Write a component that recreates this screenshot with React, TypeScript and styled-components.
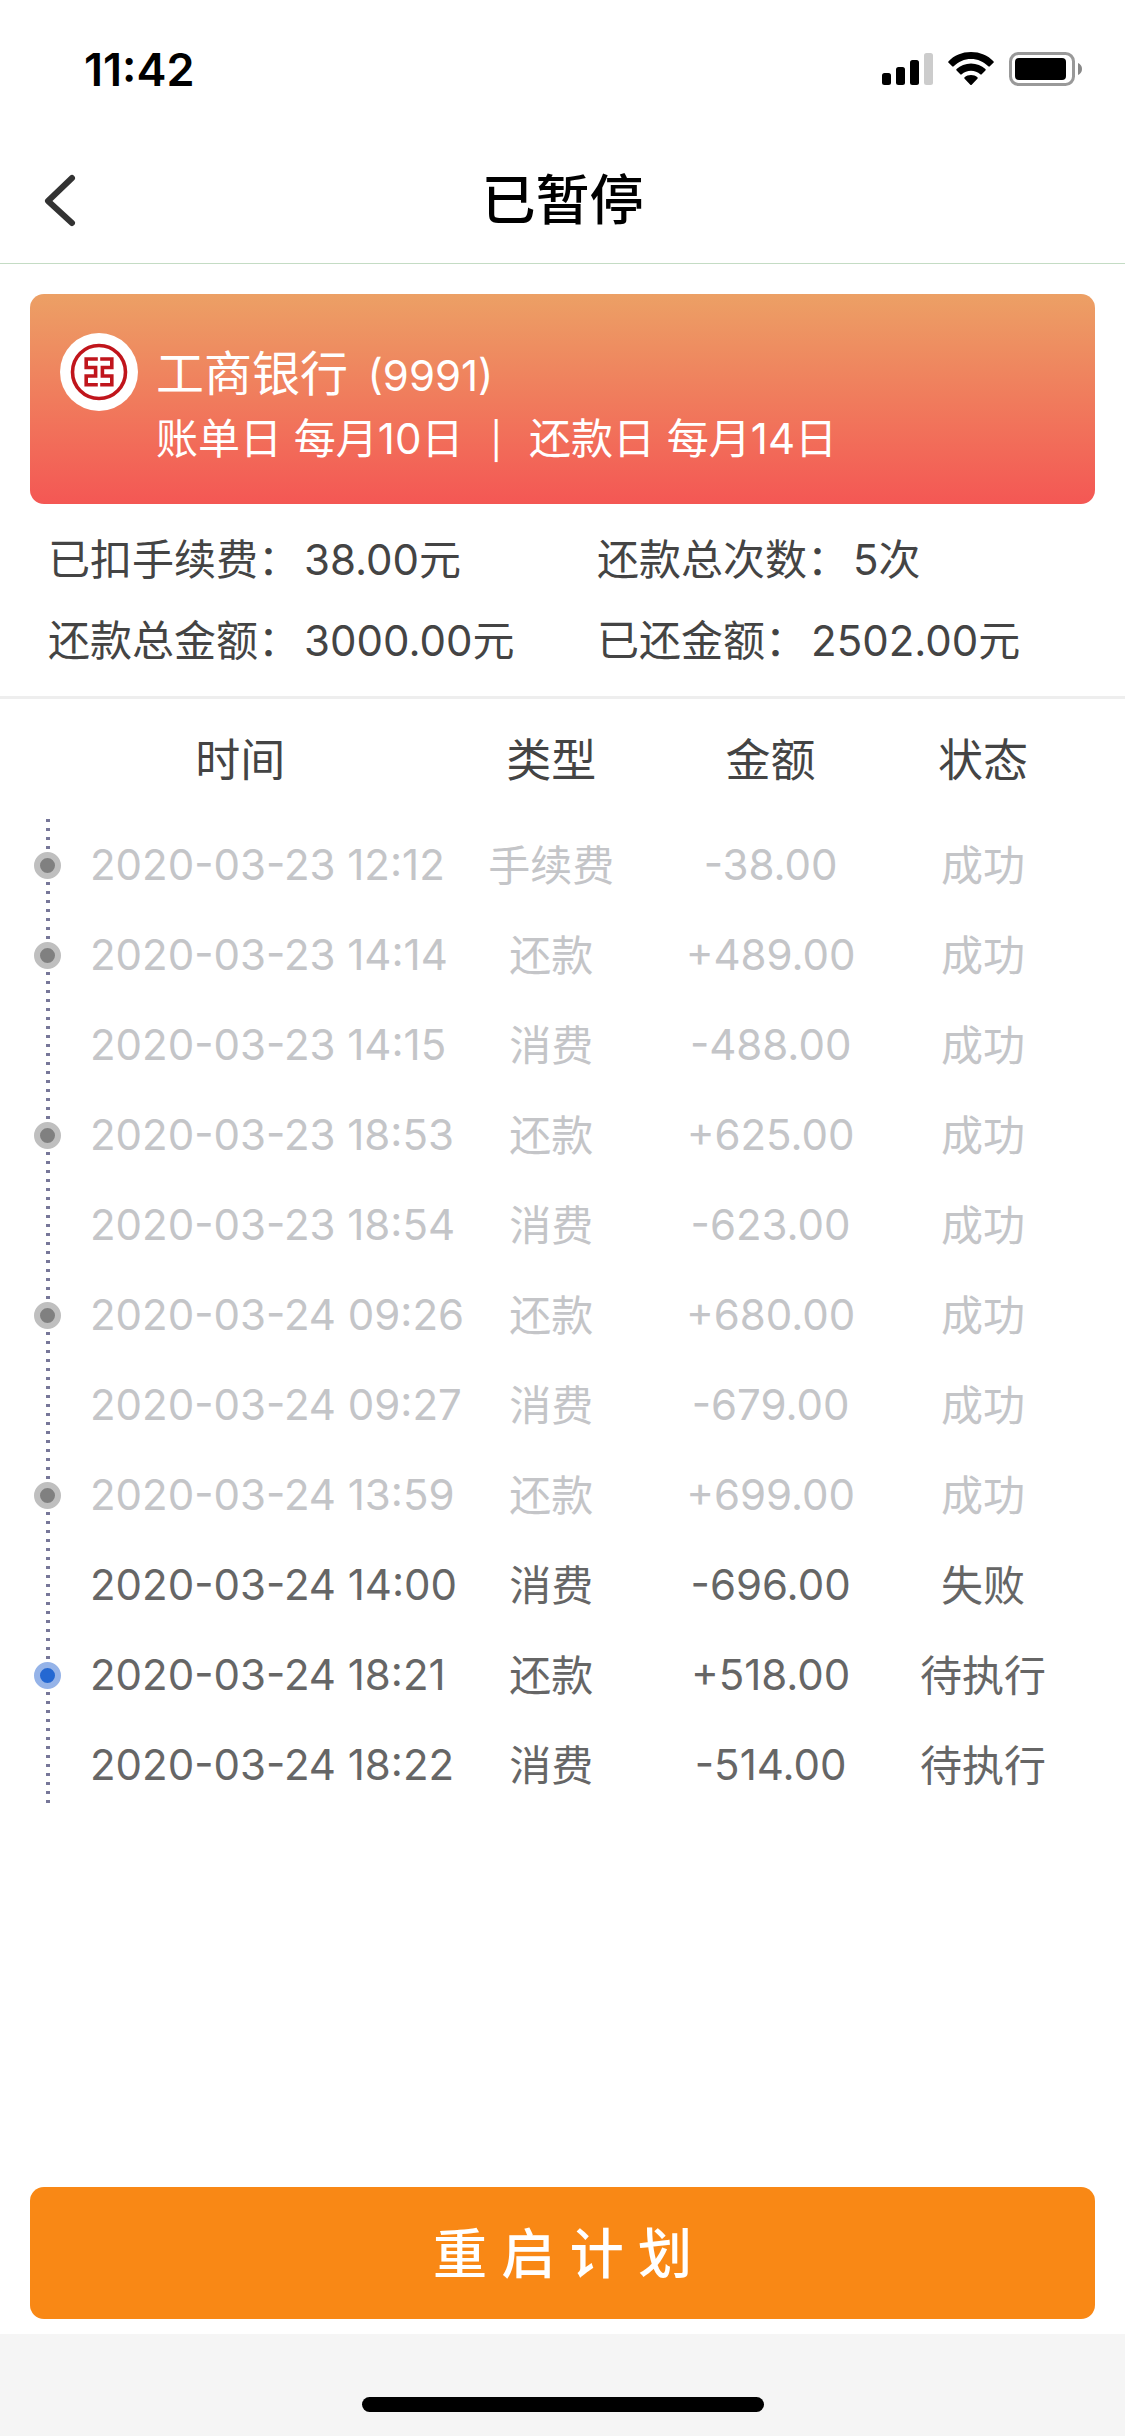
import React from "react";
import styled, { createGlobalStyle } from "styled-components";

const GlobalStyle = createGlobalStyle`
  * { box-sizing: border-box; }
  body {
    margin: 0;
    background: #fff;
    font-family: Inter, "Noto Sans CJK SC", sans-serif;
    font-size: 42px;
  }
`;

const Screen = styled.div`
  min-height: 100vh;
  display: flex;
  flex-direction: column;
`;

const StatusBar = styled.div`
  height: 132px;
  padding: 6px 42px 0 84px;
  display: flex;
  align-items: center;
  justify-content: space-between;
`;

const Clock = styled.span`
  font-size: 45px;
  font-weight: 600;
  color: #000;
`;

const StatusIcons = styled.div`
  display: flex;
  align-items: center;
  gap: 15px;

  svg { display: block; }
`;

const NavBar = styled.header`
  height: 132px;
  padding: 6px 30px 0;
  display: grid;
  grid-template-columns: 60px 1fr 60px;
  align-items: center;
  border-bottom: 1px solid #c4dcc4;
`;

const BackButton = styled.button`
  width: 60px;
  height: 60px;
  padding: 0;
  border: 0;
  background: none;

  svg { display: block; }
`;

const Title = styled.h1`
  margin: 0;
  font-size: 54px;
  line-height: 60px;
  font-weight: 500;
  text-align: center;
  color: #000;
`;

const BankCard = styled.section`
  margin: 30px 30px 0;
  height: 210px;
  padding: 39px 30px;
  display: flex;
  gap: 18px;
  border-radius: 14px;
  background: linear-gradient(#eca065, #f45754);
  color: #fff;

  svg { display: block; flex: none; }
`;

const BankName = styled.h2`
  margin: 0;
  font-size: 48px;
  line-height: 82px;
  font-weight: 400;
`;

const CardNumber = styled.span`
  margin-left: 6px;
  font-size: 42px;
`;

const BillDays = styled.p`
  margin: 0;
  line-height: 44px;
  white-space: nowrap;
`;

const Separator = styled.span`
  margin: 0 15px;
  font-size: 36px;
`;

const Summary = styled.dl`
  margin: 0;
  padding: 15px 48px;
  display: grid;
  grid-template-columns: 549fr 480fr;
  border-bottom: 3px solid #eee;
  color: #444;
`;

const SummaryItem = styled.div`
  display: flex;
  gap: 4px;
  line-height: 81px;
  white-space: nowrap;

  dt, dd { margin: 0; }
`;

const PlanTable = styled.table`
  width: 100%;
  table-layout: fixed;
  border-collapse: collapse;
  white-space: nowrap;
`;

const HeadCell = styled.th`
  height: 120px;
  padding: 0 0 4px;
  font-size: 45px;
  font-weight: 400;
  color: #444;

  &:first-child { padding-left: 8px; }
  &:last-child { padding-right: 70px; }
`;

const Row = styled.tr<{ $done: boolean }>`
  color: ${(p) => (p.$done ? "#c4c5c8" : "#666")};
`;

const Cell = styled.td`
  height: 90px;
  padding: 0 0 4px;
  text-align: center;

  &:last-child { padding-right: 70px; }
`;

const AmountCell = styled(Cell)`
  padding: 0;
`;

const TimeCell = styled(Cell)`
  padding: 0;
  background: repeating-linear-gradient(#777799 0 3px, transparent 3px 9px) 46px 0 / 4px 90px no-repeat;
`;

const TimeLine = styled.div`
  padding: 2px 0 0 34px;
  display: flex;
  align-items: center;
  gap: 29px;

  time { padding-bottom: 2px; }
`;

const Node = styled.span<{ $tone?: "grey" | "blue" }>`
  width: 27px;
  height: 27px;
  flex: none;
  border: 6px solid ${(p) => (p.$tone === "blue" ? "#95b3e8" : "#bfbfbf")};
  border-radius: 50%;
  background: ${(p) => (p.$tone === "blue" ? "#2468d2" : "#808080")};
  visibility: ${(p) => (p.$tone ? "visible" : "hidden")};
`;

const ActionBar = styled.div`
  margin-top: auto;
  padding: 0 30px 15px;
`;

const RestartButton = styled.button`
  display: block;
  width: 100%;
  height: 132px;
  padding: 0 0 6px;
  border: 0;
  border-radius: 14px;
  background: #f98815;
  color: #fff;
  font-family: inherit;
  font-size: 54px;
  font-weight: 500;
`;

const HomeArea = styled.footer`
  height: 102px;
  padding-bottom: 24px;
  display: flex;
  align-items: flex-end;
  justify-content: center;
  background: #f5f5f5;
`;

const HomeIndicator = styled.div`
  width: 402px;
  height: 15px;
  border-radius: 8px;
  background: #000;
`;

const SignalIcon = () => (
  <svg width="51" height="34" viewBox="0 0 51 34" aria-hidden="true">
    <rect x="0" y="21" width="9" height="12" rx="2.5" />
    <rect x="14" y="15" width="9" height="18" rx="2.5" />
    <rect x="28" y="8" width="9" height="25" rx="2.5" />
    <rect x="42" y="1" width="9" height="32" rx="2.5" fill="#ccc" />
  </svg>
);

const WifiIcon = () => (
  <svg width="46" height="34" viewBox="0 0 46 34" aria-hidden="true">
    <path d="M23 0C14 0 6 3.400.6 9.200a1 1 0 0 0 0 1.500l3.600 3.600a1 1 0 0 0 1.500 0C10.300 9.700 16.300 7 23 7s12.700 2.700 17.300 7.300a1 1 0 0 0 1.500 0l3.600-3.600a1 1 0 0 0 0-1.500C40 3.400 32 0 23 0z" />
    <path d="M23 11.500c-5.600 0-10.700 2.100-14.400 5.600a1 1 0 0 0 0 1.500l3.700 3.700a1 1 0 0 0 1.400 0c2.500-2.200 5.800-3.600 9.300-3.600s6.800 1.400 9.300 3.600a1 1 0 0 0 1.400 0l3.700-3.700a1 1 0 0 0 0-1.500C33.700 13.600 28.600 11.500 23 11.500z" />
    <path d="M23 23c-2.500 0-4.700.9-6.400 2.300a1 1 0 0 0 0 1.500l5.700 5.900a1 1 0 0 0 1.400 0l5.700-5.900a1 1 0 0 0 0-1.500C27.700 23.900 25.500 23 23 23z" />
  </svg>
);

const BatteryIcon = () => (
  <svg width="74" height="34" viewBox="0 0 74 34" aria-hidden="true">
    <rect x="1.500" y="1.500" width="63" height="31" rx="8" fill="none" stroke="#999" strokeWidth="3" />
    <rect x="6" y="6" width="51" height="22" rx="4" />
    <path d="M69 11c2.600 1 4 3.400 4 6s-1.400 5-4 6z" fill="#888" />
  </svg>
);

const BackIcon = () => (
  <svg width="60" height="60" viewBox="0 0 60 60" fill="none" stroke="#333" strokeWidth="6" strokeLinecap="round" strokeLinejoin="round" aria-hidden="true">
    <path d="M42 7L18 30L42 52" />
  </svg>
);

const BankLogo = () => (
  <svg width="78" height="78" viewBox="0 0 78 78" role="img" aria-label="工商银行">
    <circle cx="39" cy="39" r="39" fill="#fff" />
    <circle cx="39" cy="39" r="26.500" fill="none" stroke="#c0151c" strokeWidth="3.600" />
    <g fill="none" stroke="#c0151c" strokeWidth="3.600">
      <path d="M37.800 26H26.200V34.500H35.600V43H26.200V51.800H37.800" />
      <path d="M40.200 26H51.800V34.500H42.400V43H51.800V51.800H40.200" />
    </g>
  </svg>
);

const summary = [
  ["已扣手续费：", "38.00元"],
  ["还款总次数：", "5次"],
  ["还款总金额：", "3000.00元"],
  ["已还金额：", "2502.00元"],
];

type Entry = { time: string; type: string; amount: string; status: string; node?: "grey" | "blue" };

const entries: Entry[] = [
  { time: "2020-03-23 12:12", type: "手续费", amount: "-38.00", status: "成功", node: "grey" },
  { time: "2020-03-23 14:14", type: "还款", amount: "+489.00", status: "成功", node: "grey" },
  { time: "2020-03-23 14:15", type: "消费", amount: "-488.00", status: "成功" },
  { time: "2020-03-23 18:53", type: "还款", amount: "+625.00", status: "成功", node: "grey" },
  { time: "2020-03-23 18:54", type: "消费", amount: "-623.00", status: "成功" },
  { time: "2020-03-24 09:26", type: "还款", amount: "+680.00", status: "成功", node: "grey" },
  { time: "2020-03-24 09:27", type: "消费", amount: "-679.00", status: "成功" },
  { time: "2020-03-24 13:59", type: "还款", amount: "+699.00", status: "成功", node: "grey" },
  { time: "2020-03-24 14:00", type: "消费", amount: "-696.00", status: "失败" },
  { time: "2020-03-24 18:21", type: "还款", amount: "+518.00", status: "待执行", node: "blue" },
  { time: "2020-03-24 18:22", type: "消费", amount: "-514.00", status: "待执行" },
];

const columnWidths = ["42%", "14%", "25%", "19%"];

export default function App() {
  return (
    <Screen>
      <GlobalStyle />
      <StatusBar>
        <Clock>11:42</Clock>
        <StatusIcons>
          <SignalIcon />
          <WifiIcon />
          <BatteryIcon />
        </StatusIcons>
      </StatusBar>
      <NavBar>
        <BackButton aria-label="返回">
          <BackIcon />
        </BackButton>
        <Title>已暂停</Title>
      </NavBar>
      <BankCard>
        <BankLogo />
        <div>
          <BankName>
            工商银行 <CardNumber>(9991)</CardNumber>
          </BankName>
          <BillDays>
            账单日 每月10日 <Separator>|</Separator> 还款日 每月14日
          </BillDays>
        </div>
      </BankCard>
      <Summary>
        {summary.map(([label, value]) => (
          <SummaryItem key={label}>
            <dt>{label}</dt>
            <dd>{value}</dd>
          </SummaryItem>
        ))}
      </Summary>
      <PlanTable>
        <colgroup>
          {columnWidths.map((width, i) => (
            <col key={i} style={{ width }} />
          ))}
        </colgroup>
        <thead>
          <tr>
            {["时间", "类型", "金额", "状态"].map((name) => (
              <HeadCell key={name} scope="col">{name}</HeadCell>
            ))}
          </tr>
        </thead>
        <tbody>
          {entries.map((entry) => (
            <Row key={entry.time} $done={entry.status === "成功"}>
              <TimeCell>
                <TimeLine>
                  <Node $tone={entry.node} />
                  <time>{entry.time}</time>
                </TimeLine>
              </TimeCell>
              <Cell>{entry.type}</Cell>
              <AmountCell>{entry.amount}</AmountCell>
              <Cell>{entry.status}</Cell>
            </Row>
          ))}
        </tbody>
      </PlanTable>
      <ActionBar>
        <RestartButton>重 启 计 划</RestartButton>
      </ActionBar>
      <HomeArea>
        <HomeIndicator />
      </HomeArea>
    </Screen>
  );
}
